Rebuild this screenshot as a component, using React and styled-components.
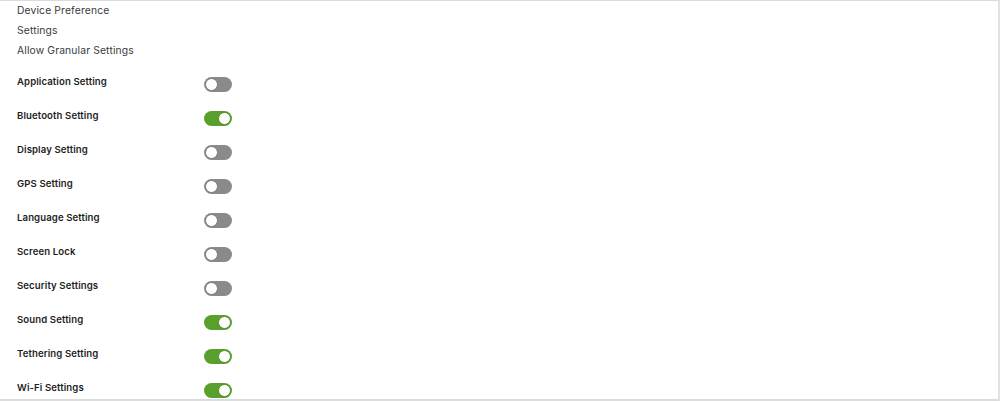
import React, { useState } from "react";
import styled, { createGlobalStyle } from "styled-components";

const GlobalStyle = createGlobalStyle`
  html, body { margin: 0; padding: 0; background: #fff; }
  body { font-family: Inter, "Open Sans", Arial, sans-serif; }
`;

const Panel = styled.div`
  box-sizing: border-box;
  width: 1000px;
  height: 401px;
  border-top: 1px solid #d6dde4;
  border-right: 2px solid #e2e2e2;
  border-bottom: 2px solid #dcdcdc;
  padding-left: 17px;
  overflow: hidden;
  position: relative;
  &::before {
    content: "";
    position: absolute;
    left: 0;
    top: -1px;
    width: 2px;
    height: 1px;
    background: #5aa02c;
  }
`;

const Header = styled.div`
  display: flex;
  flex-direction: column;
  margin-top: -1px;
`;

const HeaderLine = styled.div`
  font-size: 10.3px;
  line-height: 20px;
  color: #3a3a3a;
  letter-spacing: 0.15px;
`;

const List = styled.div`
  display: flex;
  flex-direction: column;
  margin-top: 15px;
`;

const Row = styled.div`
  display: flex;
  align-items: flex-start;
  height: 34px;
`;

const Label = styled.div`
  width: 187px;
  font-size: 9.6px;
  font-weight: 600;
  line-height: 14px;
  color: #1e1e1e;
  letter-spacing: 0.1px;
`;

const Toggle = styled.button`
  position: relative;
  margin-top: 2px;
  width: 28px;
  height: 15px;
  padding: 0;
  border: none;
  border-radius: 8px;
  background: ${(p) => (p.$on ? "#58a02b" : "#8a8a8a")};
  cursor: pointer;
  &::after {
    content: "";
    position: absolute;
    top: 1px;
    left: ${(p) => (p.$on ? "14px" : "1px")};
    width: 13px;
    height: 13px;
    box-sizing: border-box;
    border-radius: 50%;
    background: #fff;
    border: 1px solid ${(p) => (p.$on ? "#4d8f25" : "#7a7a7a")};
  }
`;

const settings = [
  ["Application Setting", false],
  ["Bluetooth Setting", true],
  ["Display Setting", false],
  ["GPS Setting", false],
  ["Language Setting", false],
  ["Screen Lock", false],
  ["Security Settings", false],
  ["Sound Setting", true],
  ["Tethering Setting", true],
  ["Wi-Fi Settings", true],
];

export default function App() {
  const [values, setValues] = useState(settings.map((s) => s[1]));
  const flip = (i) => setValues(values.map((v, j) => (j === i ? !v : v)));

  return (
    <>
      <GlobalStyle />
      <Panel>
        <Header>
          <HeaderLine>Device Preference</HeaderLine>
          <HeaderLine>Settings</HeaderLine>
          <HeaderLine>Allow Granular Settings</HeaderLine>
        </Header>
        <List>
          {settings.map(([name], i) => (
            <Row key={name}>
              <Label>{name}</Label>
              <Toggle $on={values[i]} onClick={() => flip(i)} aria-label={name} />
            </Row>
          ))}
        </List>
      </Panel>
    </>
  );
}
